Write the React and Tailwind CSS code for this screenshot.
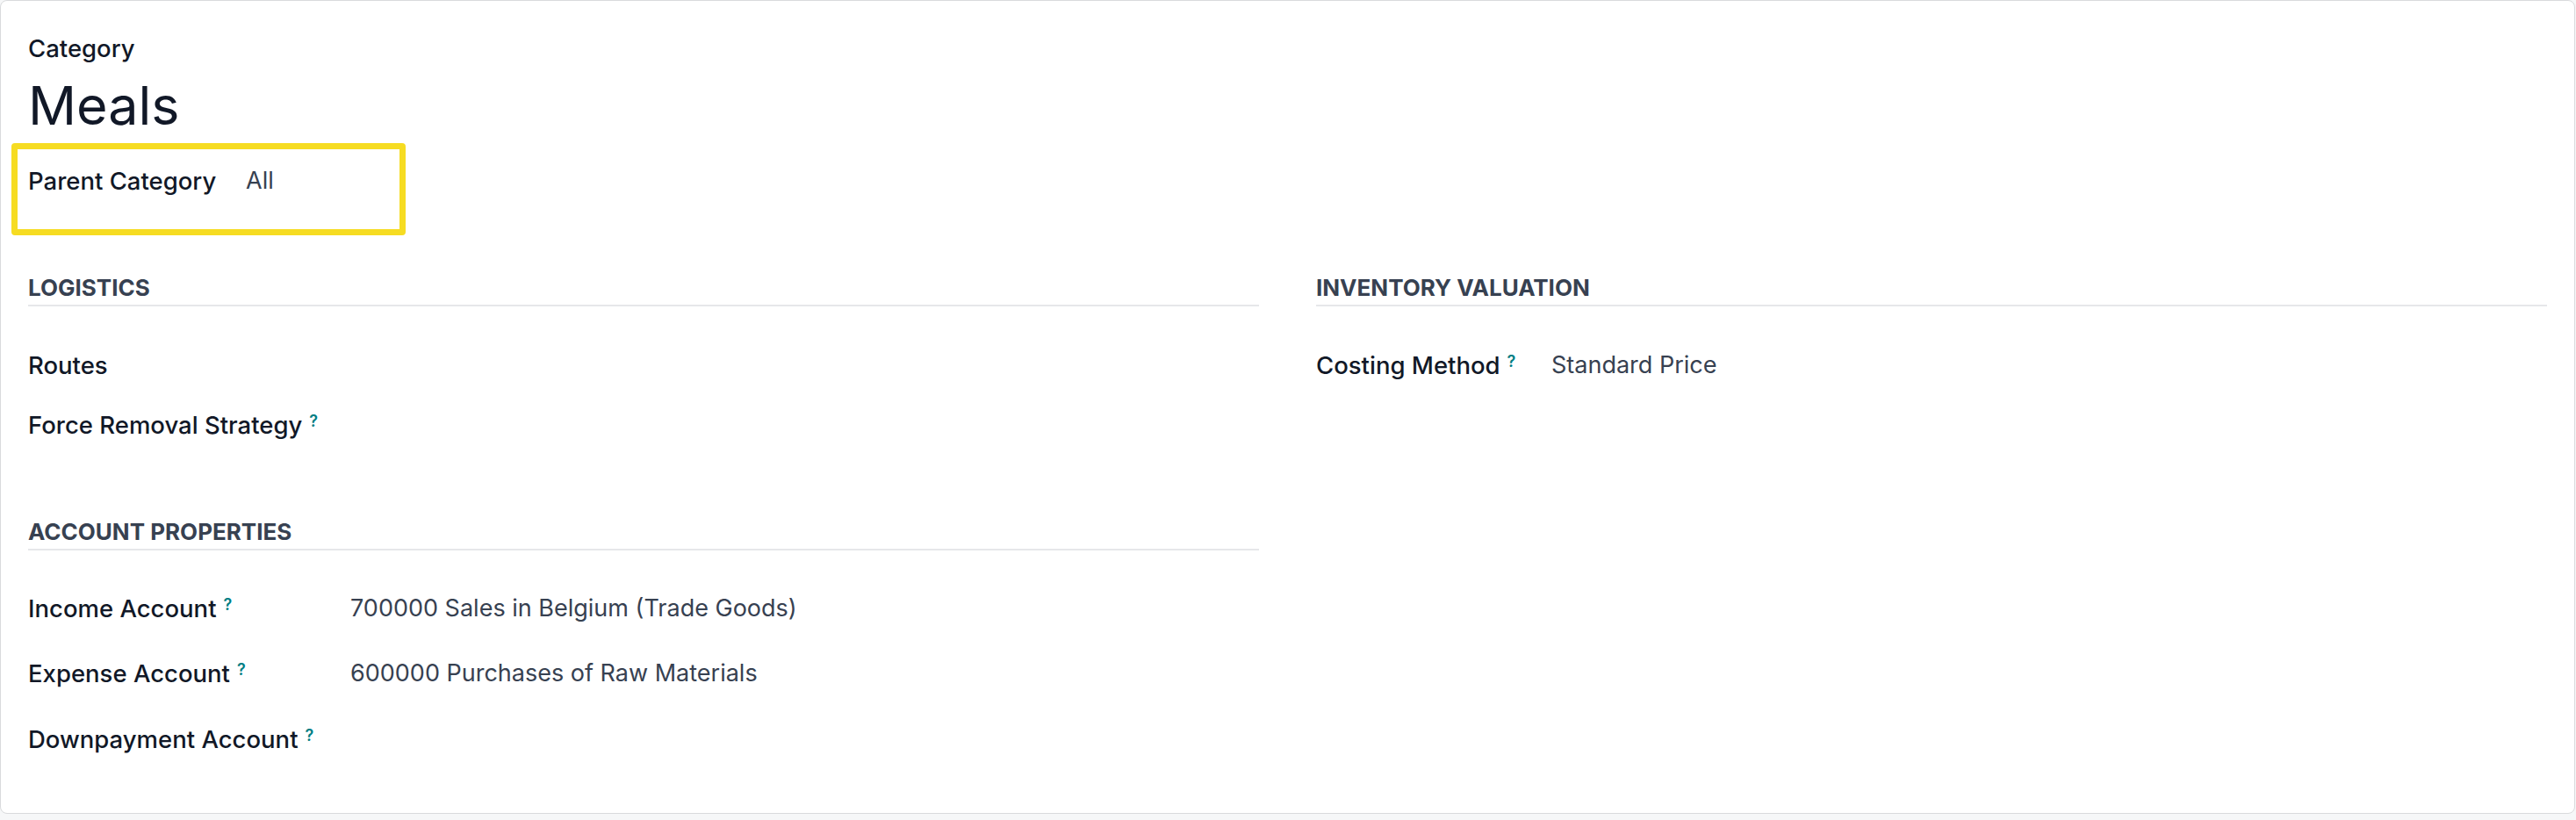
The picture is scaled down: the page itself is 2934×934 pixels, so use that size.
const font = { fontFamily: "Inter, 'Noto Sans', sans-serif" };

function Help() {
  return (
    <sup className="ml-[8px] text-[18px] font-semibold text-[#017e84] relative -top-[8px]">?</sup>
  );
}

function Field({ label, help, value, labelWidth, height }) {
  return (
    <div className={`flex items-start ${height}`}>
      <div className={`${labelWidth} shrink-0 font-medium text-[#111827]`}>
        {label}
        {help && <Help />}
      </div>
      {value && <div className="text-[27px] text-[#374151]">{value}</div>}
    </div>
  );
}

function SectionTitle({ children }) {
  return (
    <div className="h-[39px] border-b-2 border-[#e6e7ea] text-[26px] leading-[36px] font-bold uppercase text-[#374151]">
      {children}
    </div>
  );
}

export default function App() {
  return (
    <div className="w-[2934px] h-[934px] bg-[#f6f7f8]" style={font}>
      <div className="w-[2933px] h-[927px] bg-white border border-[#d9dadc] rounded-[8px] pt-[36px] px-[31px] text-[27.5px] leading-[36px]">
        <div className="font-medium text-[#111827]">Category</div>
        <div className="mt-[9px] text-[61px] leading-[76px] text-[#111827]">Meals</div>

        <div className="mt-[5px] -ml-[19px] w-[449px] h-[105px] border-[7px] border-[#f6dc22] rounded-[4px] pl-[12px] pt-[18px]">
          <Field label="Parent Category" value="All" labelWidth="w-[248px]" />
        </div>

        <div className="mt-[42px] grid grid-cols-2 gap-x-[65px]">
          <div>
            <SectionTitle>Logistics</SectionTitle>
            <div className="pt-[49px]">
              <Field label="Routes" labelWidth="w-[300px]" height="h-[68px]" />
              <Field label="Force Removal Strategy" help labelWidth="w-[400px]" />
            </div>
            <div className="mt-[86px]">
              <SectionTitle>Account Properties</SectionTitle>
              <div className="pt-[48px]">
                <Field label="Income Account" help value="700000 Sales in Belgium (Trade Goods)" labelWidth="w-[367px]" height="h-[74px]" />
                <Field label="Expense Account" help value="600000 Purchases of Raw Materials" labelWidth="w-[367px]" height="h-[75px]" />
                <Field label="Downpayment Account" help labelWidth="w-[367px]" />
              </div>
            </div>
          </div>
          <div>
            <SectionTitle>Inventory Valuation</SectionTitle>
            <div className="pt-[49px]">
              <Field label="Costing Method" help value="Standard Price" labelWidth="w-[268px]" />
            </div>
          </div>
        </div>
      </div>
    </div>
  );
}
